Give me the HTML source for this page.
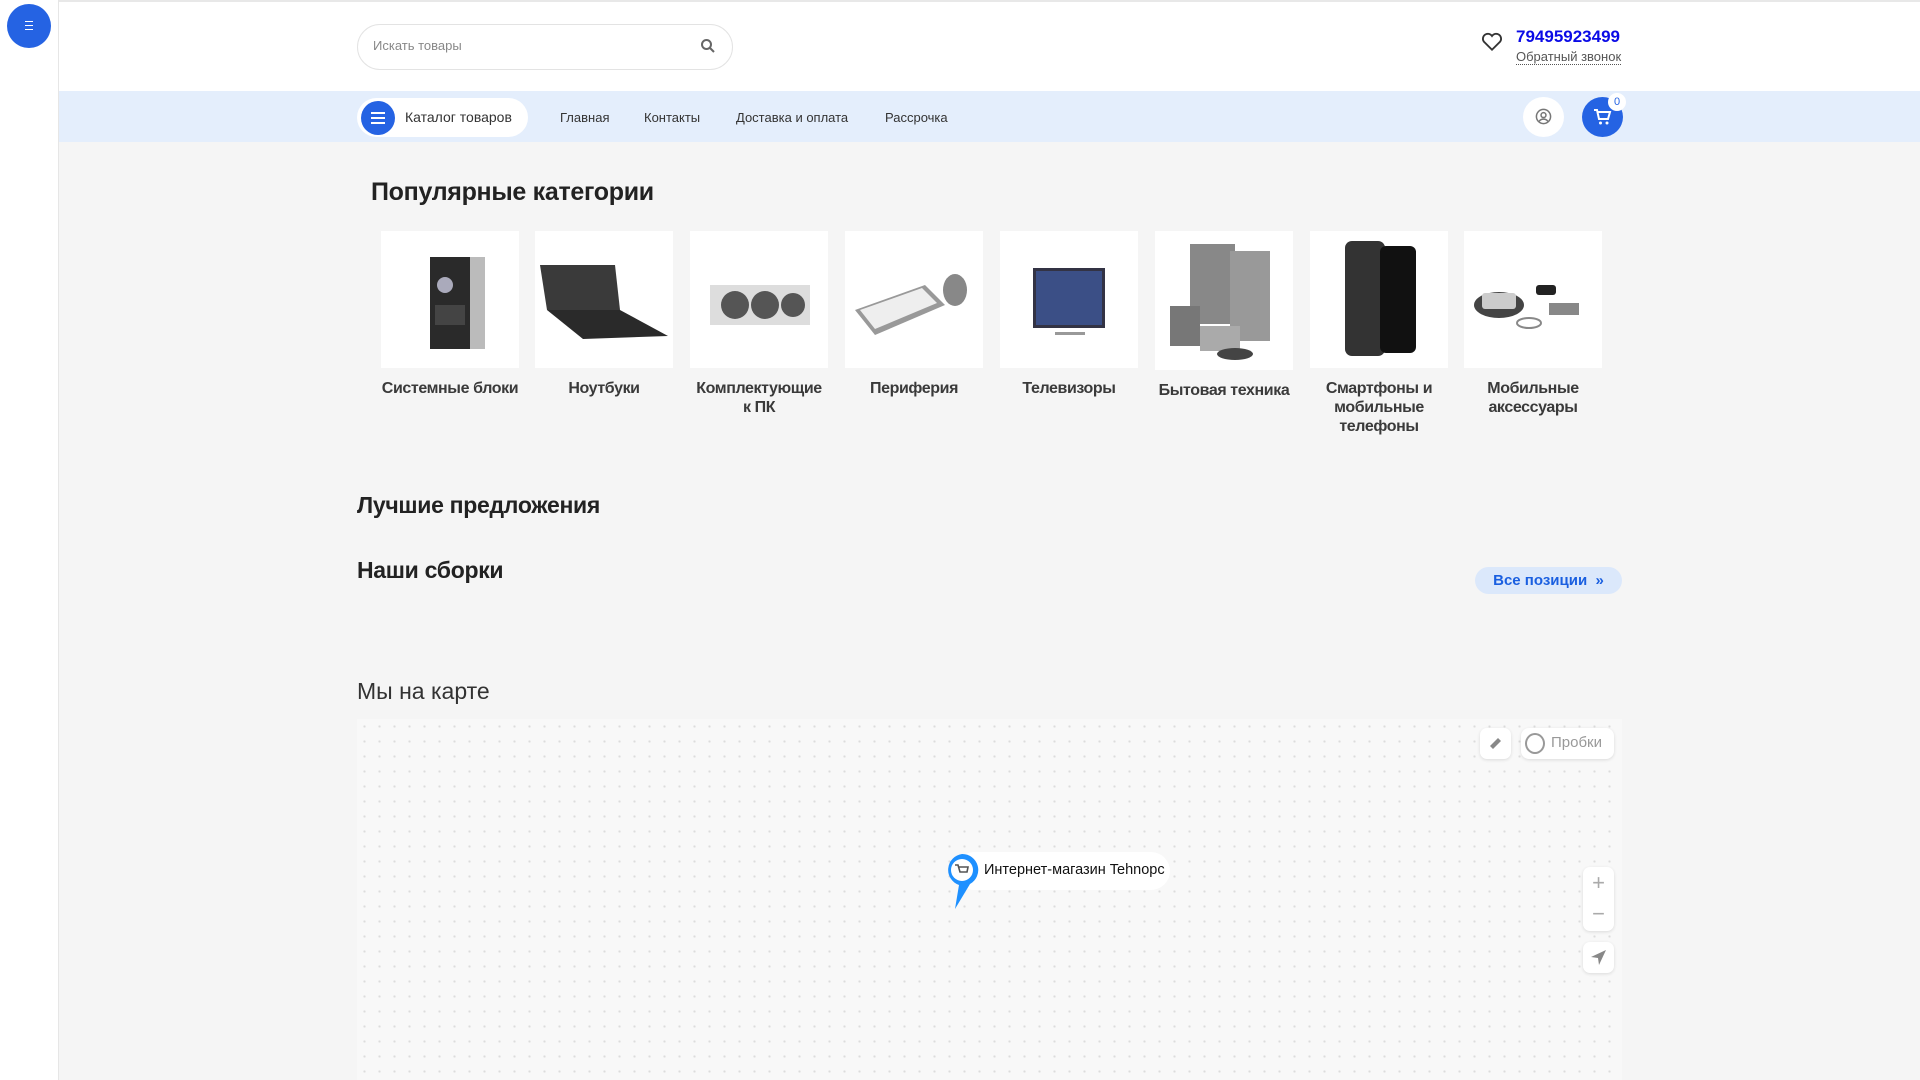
<!DOCTYPE html>
<html><head><meta charset="utf-8"><style>
*{box-sizing:border-box;margin:0;padding:0}
body{width:1920px;height:1080px;overflow:hidden;background:#f5f5f5;font-family:"Liberation Sans",sans-serif;color:#222;position:relative}
.abs{position:absolute}
#side{left:0;top:0;width:59px;height:1080px;background:#fff;border-right:1px solid #e6e6e6}
#top{left:59px;top:0;width:1861px;height:91px;background:#fff;border-top:2px solid #e8e8e8}
#nav{left:59px;top:91px;width:1861px;height:51px;background:#e4eefc}
.cat{position:absolute;top:231px;width:138px;text-align:center}
.cat .img{width:138px;height:137px;background:#fff;display:flex;align-items:center;justify-content:center}
.cat .t{margin-top:11px;font-size:16px;line-height:19px;color:#3a3a3a;font-weight:bold;letter-spacing:-.4px}
.navl{position:absolute;top:110px;font-size:13px;color:#333}
h2{position:absolute;font-size:23px;font-weight:bold;color:#222;letter-spacing:-.3px}
</style></head><body>
<div id="side" class="abs"><div class="abs" style="left:7px;top:4px;width:44px;height:44px;border-radius:50%;background:#2563e3">
<div class="abs" style="left:18px;top:17px;width:8px;height:1px;background:#fff;box-shadow:0 4px 0 #fff,0 8px 0 #fff"></div></div></div>
<div id="top" class="abs"></div>
<div class="abs" style="left:357px;top:24px;width:376px;height:46px;border:1px solid #e3e3e3;border-radius:23px;background:#fff"></div>
<div class="abs" style="left:373px;top:38px;font-size:13px;color:#888">Искать товары</div>
<svg class="abs" style="left:700px;top:38px" width="16" height="16" viewBox="0 0 16 16"><circle cx="6.5" cy="6.5" r="4.5" fill="none" stroke="#666" stroke-width="2"/><path d="M10 10l4 4" stroke="#666" stroke-width="2"/></svg>
<svg class="abs" style="left:1481px;top:31px" width="22" height="21" viewBox="0 0 24 22"><path d="M12 20L3 11a5 5 0 0 1 9-6 5 5 0 0 1 9 6z" fill="none" stroke="#333" stroke-width="2"/></svg>
<div class="abs" style="left:1516px;top:27px;font-size:17px;font-weight:bold;color:#0b0be6">79495923499</div>
<div class="abs" style="left:1516px;top:49px;font-size:13px;color:#555;border-bottom:1px dotted #555;line-height:15px">Обратный звонок</div>
<div id="nav" class="abs"></div>
<div class="abs" style="left:357px;top:98px;width:171px;height:39px;border-radius:20px;background:#fff"></div>
<div class="abs" style="left:361px;top:101px;width:34px;height:34px;border-radius:50%;background:#2563e3">
<div class="abs" style="left:10px;top:11px;width:14px;height:2px;background:#fff;box-shadow:0 5px 0 #fff,0 10px 0 #fff"></div></div>
<div class="abs" style="left:405px;top:109px;font-size:14px;color:#333">Каталог товаров</div>
<div class="navl" style="left:560px">Главная</div>
<div class="navl" style="left:644px">Контакты</div>
<div class="navl" style="left:736px">Доставка и оплата</div>
<div class="navl" style="left:885px">Рассрочка</div>
<div class="abs" style="left:1523px;top:97px;width:41px;height:40px;border-radius:50%;background:#fff"></div>
<svg class="abs" style="left:1535px;top:108px" width="17" height="17" viewBox="0 0 18 18"><circle cx="9" cy="9" r="7.5" fill="none" stroke="#777" stroke-width="1.6"/><circle cx="9" cy="7.5" r="2.6" fill="none" stroke="#777" stroke-width="1.6"/><path d="M4.5 14a5 4 0 0 1 9 0" fill="none" stroke="#777" stroke-width="1.6"/></svg>
<div class="abs" style="left:1582px;top:97px;width:41px;height:40px;border-radius:50%;background:#2563e3"></div>
<svg class="abs" style="left:1593px;top:108px" width="19" height="18" viewBox="0 0 19 18"><path d="M1 2h3l2 9h9l2-7H5" fill="none" stroke="#fff" stroke-width="2"/><circle cx="7.5" cy="15" r="1.5" fill="#fff"/><circle cx="14" cy="15" r="1.5" fill="#fff"/></svg>
<div class="abs" style="left:1608px;top:93px;width:18px;height:18px;border-radius:50%;background:#fff;color:#2563e3;font-size:11px;text-align:center;line-height:18px">0</div>

<h2 style="left:371px;top:178px;font-size:25px">Популярные категории</h2>

<div class="cat" style="left:381px"><div class="img"><svg width="90" height="110"><rect x="25" y="12" width="55" height="92" fill="#bbb"/><rect x="25" y="12" width="40" height="92" fill="#2a2a2a"/><circle cx="40" cy="40" r="8" fill="#aab"/><rect x="30" y="60" width="30" height="20" fill="#444"/></svg></div><div class="t">Системные блоки</div></div>
<div class="cat" style="left:535px"><div class="img"><svg width="138" height="110"><path d="M5 20h75l5 45H12z" fill="#3a3a3a"/><path d="M12 65h73l48 26-85 3z" fill="#2a2a2a"/></svg></div><div class="t">Ноутбуки</div></div>
<div class="cat" style="left:690px"><div class="img"><svg width="138" height="110"><path d="M20 40h100v40H20z" fill="#ddd"/><circle cx="45" cy="60" r="14" fill="#555"/><circle cx="75" cy="60" r="14" fill="#555"/><circle cx="103" cy="60" r="12" fill="#555"/></svg></div><div class="t">Комплектующие<br>к ПК</div></div>
<div class="cat" style="left:845px"><div class="img"><svg width="138" height="110"><path d="M10 65l70-25 20 20-70 30z" fill="#999"/><path d="M15 65l62-22 15 15-62 26z" fill="#eee"/><ellipse cx="110" cy="45" rx="12" ry="16" fill="#888"/></svg></div><div class="t">Периферия</div></div>
<div class="cat" style="left:1000px"><div class="img"><svg width="138" height="110"><rect x="33" y="23" width="72" height="60" fill="#334"/><rect x="36" y="26" width="66" height="54" fill="#3b4f86"/><rect x="55" y="87" width="30" height="3" fill="#999"/></svg></div><div class="t">Телевизоры</div></div>
<div class="cat" style="left:1155px"><div class="img" style="height:139px"><svg width="138" height="130"><rect x="35" y="8" width="45" height="80" fill="#888"/><rect x="75" y="15" width="40" height="90" fill="#999"/><rect x="15" y="70" width="30" height="40" fill="#777"/><rect x="45" y="90" width="40" height="25" fill="#aaa"/><ellipse cx="80" cy="118" rx="18" ry="6" fill="#444"/></svg></div><div class="t">Бытовая техника</div></div>
<div class="cat" style="left:1310px"><div class="img"><svg width="138" height="137"><rect x="35" y="10" width="40" height="115" rx="7" fill="#333"/><rect x="70" y="15" width="36" height="107" rx="6" fill="#111"/></svg></div><div class="t">Смартфоны и мобильные телефоны</div></div>
<div class="cat" style="left:1464px"><div class="img"><svg width="138" height="110"><ellipse cx="35" cy="60" rx="25" ry="13" fill="#444"/><rect x="18" y="48" width="34" height="16" rx="3" fill="#ccc"/><rect x="85" y="58" width="30" height="12" fill="#888"/><rect x="72" y="40" width="20" height="10" rx="3" fill="#222"/><ellipse cx="65" cy="78" rx="12" ry="5" fill="none" stroke="#888" stroke-width="2"/></svg></div><div class="t">Мобильные аксессуары</div></div>

<h2 style="left:357px;top:492px">Лучшие предложения</h2>
<h2 style="left:357px;top:557px">Наши сборки</h2>
<div class="abs" style="left:1475px;top:567px;width:147px;height:27px;border-radius:14px;background:#dbe8fb;color:#1a5fe0;font-size:15px;font-weight:bold;text-align:center;line-height:27px">Все позиции&nbsp; »</div>
<div class="abs" style="left:357px;top:678px;font-size:23px;color:#333">Мы на карте</div>

<div class="abs" style="left:357px;top:719px;width:1265px;height:361px;background-color:#f8f8f8;background-image:radial-gradient(#dcdcdc 1px,transparent 1.3px);background-size:15px 15px"></div>
<div class="abs" style="left:1480px;top:728px;width:31px;height:31px;border-radius:7px;background:#fff;box-shadow:0 1px 3px rgba(0,0,0,.12)"></div>
<svg class="abs" style="left:1487px;top:735px" width="17" height="17" viewBox="0 0 17 17"><path d="M3 11l8-8 3 3-8 8z" fill="#888"/></svg>
<div class="abs" style="left:1521px;top:728px;width:93px;height:31px;border-radius:8px;background:#fff;box-shadow:0 1px 3px rgba(0,0,0,.12)"></div>
<div class="abs" style="left:1525px;top:733px;width:20px;height:21px;border-radius:50%;border:2px solid #999"></div>
<div class="abs" style="left:1551px;top:734px;font-size:15px;color:#999">Пробки</div>
<div class="abs" style="left:1583px;top:867px;width:31px;height:64px;border-radius:7px;background:#fff;box-shadow:0 1px 3px rgba(0,0,0,.12);color:#aaa;text-align:center;font-size:22px;line-height:31px">+<br>−</div>
<div class="abs" style="left:1583px;top:942px;width:31px;height:31px;border-radius:7px;background:#fff;box-shadow:0 1px 3px rgba(0,0,0,.12)"></div>
<svg class="abs" style="left:1590px;top:949px" width="17" height="17" viewBox="0 0 17 17"><path d="M16 1L1 8l7 1 1 7z" fill="#888"/></svg>
<div class="abs" style="left:955px;top:852px;width:215px;height:38px;border-radius:19px;background:#fff"></div>
<svg class="abs" style="left:943px;top:853px" width="38" height="58" viewBox="0 0 38 58"><path d="M19 1a16 16 0 0 1 8 30L12 56l4-24A16 16 0 0 1 19 1z" fill="#1e90ff"/><circle cx="19" cy="17" r="11" fill="#fff"/><path d="M12 12h3l2 7h7l1-5h-9" fill="none" stroke="#555" stroke-width="1.6"/></svg>
<div class="abs" style="left:984px;top:862px;font-size:14.5px;color:#111">Интернет-магазин Tehnopc</div>
</body></html>
